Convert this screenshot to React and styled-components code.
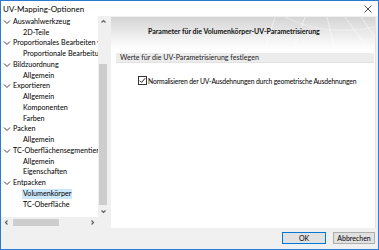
import React from "react";
import styled, { createGlobalStyle } from "styled-components";

const Global = createGlobalStyle`
  html, body { margin: 0; padding: 0; background: #fff; }
  * { box-sizing: border-box; }
  body { font-family: Lato, "Noto Sans", sans-serif; }
`;

const Window = styled.div`
  width: 379px;
  height: 250px;
  border: 1px solid #2a7ad2;
  background: #f0f0f0;
  display: flex;
  flex-direction: column;
  overflow: hidden;
`;

const TitleBar = styled.div`
  height: 15px;
  flex: none;
  background: #fff;
  display: flex;
  align-items: center;
  justify-content: space-between;
  padding: 0 6px 0 2px;
  font-size: 8px;
  color: #000;
`;

const Body = styled.div`
  flex: 1;
  display: flex;
  min-height: 0;
`;

const TreePane = styled.div`
  width: 107px;
  flex: none;
  display: grid;
  grid-template-columns: 97px 10px;
  grid-template-rows: 1fr 11px;
  background: #fff;
`;

const TreeArea = styled.div`
  overflow: hidden;
  padding-top: 0.5px;
  background: #fff;
`;

const Row = styled.div`
  height: 10.75px;
  display: flex;
  align-items: center;
  white-space: nowrap;
  font-size: 7.2px;
  color: #000;
  padding-left: ${(p) => (p.$level === 1 ? 2 : 21)}px;
`;

const Label = styled.span`
  display: inline-block;
  line-height: 10px;
  padding: 0 1px;
  background: ${(p) => (p.$selected ? "#cce8ff" : "transparent")};
`;

const Chevron = styled.svg`
  width: 8px;
  height: 6px;
  margin-right: 1px;
  flex: none;
`;

const VScroll = styled.div`
  background: #f0f0f0;
  display: grid;
  grid-template-rows: 11px 1fr 11px;
  justify-items: center;
`;

const HScroll = styled.div`
  background: #f0f0f0;
  display: grid;
  grid-template-columns: 11px 1fr 11px;
  align-items: center;
`;

const Corner = styled.div`
  background: #f0f0f0;
`;

const Track = styled.div`
  position: relative;
  width: 100%;
  height: 100%;
`;

const VThumb = styled.div`
  position: absolute;
  left: 1px;
  right: 1px;
  top: 37px;
  bottom: 1px;
  background: #cdcdcd;
`;

const HThumb = styled.div`
  position: absolute;
  top: 2px;
  bottom: 2px;
  left: 1px;
  width: 46px;
  background: #cdcdcd;
`;

const Arrow = styled.svg`
  width: 7px;
  height: 7px;
  align-self: center;
  justify-self: center;
`;

const RightPane = styled.div`
  flex: 1;
  margin: 1px 2px 0 3px;
  background: #fff;
  display: flex;
  flex-direction: column;
  border-right: 1px solid #e3e3e3;
`;

const Banner = styled.div`
  position: relative;
  height: 33px;
  flex: none;
  background: linear-gradient(180deg, #d4d4d4 0%, #e6e6e6 40%, #f8f8f8 80%, #ffffff 100%);
  display: flex;
  align-items: center;
  padding: 0 0 6px 37px;
  overflow: hidden;
`;

const BannerDeco = styled.svg`
  position: absolute;
  right: 0;
  top: 0;
  width: 110px;
  height: 33px;
`;

const BannerTitle = styled.div`
  position: relative;
  font-size: 7px;
  font-weight: bold;
  color: #111;
  white-space: nowrap;
`;

const Content = styled.div`
  padding: 3px 1px 0 5px;
  display: flex;
  flex-direction: column;
`;

const GroupHeader = styled.div`
  height: 10px;
  background: #ececec;
  border-bottom: 1px solid #e2e2e2;
  font-size: 7.1px;
  color: #222;
  display: flex;
  align-items: center;
  padding-left: 4px;
  white-space: nowrap;
`;

const CheckRow = styled.label`
  display: flex;
  align-items: center;
  margin: 13px 0 0 22px;
  font-size: 6.8px;
  letter-spacing: -0.15px;
  color: #000;
  white-space: nowrap;
`;

const Box = styled.span`
  width: 9px;
  height: 9px;
  border: 1px solid #333;
  background: #fff;
  display: inline-flex;
  align-items: center;
  justify-content: center;
  margin-right: 1px;
`;

const Footer = styled.div`
  height: 21px;
  flex: none;
  display: flex;
  justify-content: flex-end;
  align-items: center;
  gap: 7px;
  padding: 0 3px 1px 0;
`;

const Button = styled.div`
  width: ${(p) => p.$w}px;
  height: 12px;
  background: #e1e1e1;
  border: 1px solid ${(p) => (p.$default ? "#0078d7" : "#adadad")};
  font-size: 7px;
  color: #000;
  display: flex;
  align-items: center;
  justify-content: center;
  white-space: nowrap;
`;

const rows = [
  [1, "Auswahlwerkzeug"],
  [2, "2D-Teile"],
  [1, "Proportionales Bearbeiten v"],
  [2, "Proportionale Bearbeitung"],
  [1, "Bildzuordnung"],
  [2, "Allgemein"],
  [1, "Exportieren"],
  [2, "Allgemein"],
  [2, "Komponenten"],
  [2, "Farben"],
  [1, "Packen"],
  [2, "Allgemein"],
  [1, "TC-Oberflächensegmentierung"],
  [2, "Allgemein"],
  [2, "Eigenschaften"],
  [1, "Entpacken"],
  [2, "Volumenkörper", true],
  [2, "TC-Oberfläche"],
];

const ChevronDown = () => (
  <Chevron viewBox="0 0 8 6">
    <polyline points="1,1.5 4,4.5 7,1.5" fill="none" stroke="#444" strokeWidth="1" />
  </Chevron>
);

const Caret = ({ dir }) => {
  const pts = {
    up: "1.5,4.5 3.5,2.5 5.5,4.5",
    down: "1.5,2.5 3.5,4.5 5.5,2.5",
    left: "4.5,1.5 2.5,3.5 4.5,5.5",
    right: "2.5,1.5 4.5,3.5 2.5,5.5",
  }[dir];
  return (
    <Arrow viewBox="0 0 7 7">
      <polyline points={pts} fill="none" stroke="#606060" strokeWidth="1.2" />
    </Arrow>
  );
};

export default function App() {
  return (
    <>
      <Global />
      <Window>
        <TitleBar>
          <span>UV-Mapping-Optionen</span>
          <svg width="8" height="8" viewBox="0 0 8 8">
            <path d="M0.5 0.5 L7.5 7.5 M7.5 0.5 L0.5 7.5" stroke="#222" strokeWidth="0.8" />
          </svg>
        </TitleBar>
        <Body>
          <TreePane>
            <TreeArea>
              {rows.map(([level, text, sel], i) => (
                <Row key={i} $level={level}>
                  {level === 1 && <ChevronDown />}
                  <Label $selected={sel}>{text}</Label>
                </Row>
              ))}
            </TreeArea>
            <VScroll>
              <Caret dir="up" />
              <Track>
                <VThumb />
              </Track>
              <Caret dir="down" />
            </VScroll>
            <HScroll>
              <Caret dir="left" />
              <Track>
                <HThumb />
              </Track>
              <Caret dir="right" />
            </HScroll>
            <Corner />
          </TreePane>
          <RightPane>
            <Banner>
              <BannerDeco viewBox="0 0 110 33" preserveAspectRatio="none">
                <path d="M10 0 L0 33 M40 0 L28 33 M62 0 L70 33 M80 0 L104 33 M96 0 L110 20" stroke="#ffffff" strokeOpacity="0.55" strokeWidth="1" fill="none" />
                <path d="M20 0 Q60 20 110 10" stroke="#ffffff" strokeOpacity="0.4" strokeWidth="1" fill="none" />
              </BannerDeco>
              <BannerTitle>Parameter für die Volumenkörper-UV-Parametrisierung</BannerTitle>
            </Banner>
            <Content>
              <GroupHeader>Werte für die UV-Parametrisierung festlegen</GroupHeader>
              <CheckRow>
                <Box>
                  <svg width="7" height="7" viewBox="0 0 7 7">
                    <polyline points="0.8,3.6 2.6,5.4 6.2,1.2" fill="none" stroke="#222" strokeWidth="1" />
                  </svg>
                </Box>
                Normalisieren der UV-Ausdehnungen durch geometrische Ausdehnungen
              </CheckRow>
            </Content>
          </RightPane>
        </Body>
        <Footer>
          <Button $w={44} $default>OK</Button>
          <Button $w={42}>Abbrechen</Button>
        </Footer>
      </Window>
    </>
  );
}
